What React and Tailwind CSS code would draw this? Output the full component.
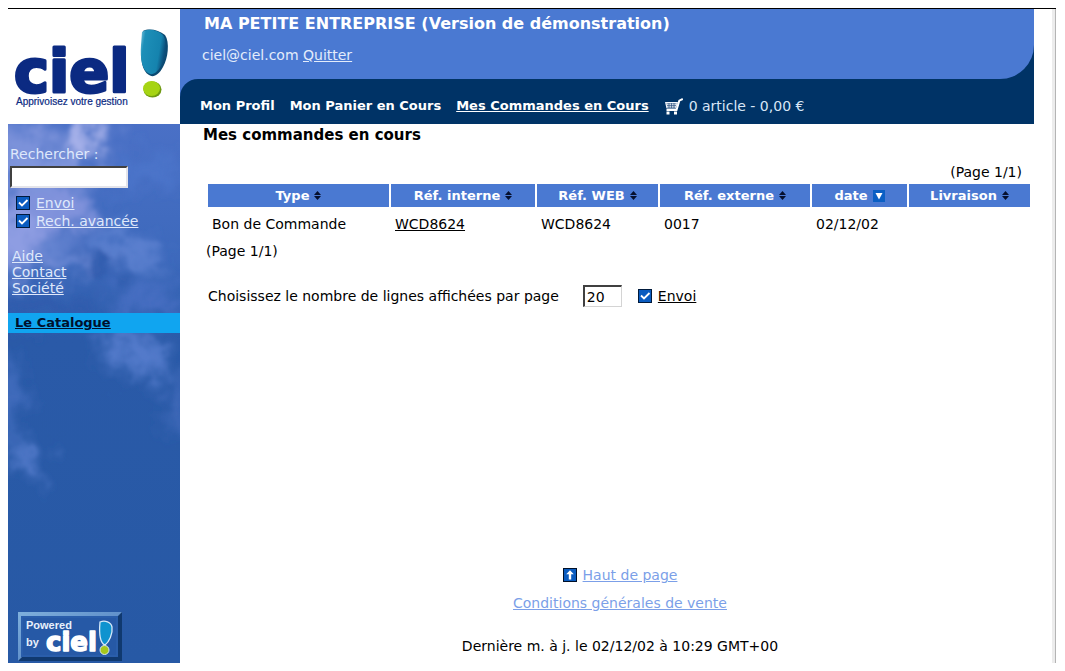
import { useState } from "react";

const columns = [
  { label: "Type", width: "w-[181px]" },
  { label: "Réf. interne", width: "w-[144px]" },
  { label: "Réf. WEB", width: "w-[121px]" },
  { label: "Réf. externe", width: "w-[150px]" },
  { label: "date", width: "w-[95px]", sorted: true },
  { label: "Livraison", width: "" },
];

const orders = [
  {
    type: "Bon de Commande",
    internal: "WCD8624",
    web: "WCD8624",
    external: "0017",
    date: "02/12/02",
    delivery: "",
  },
];

/* ===========================================
              Icons and logos
=========================================== */

function SortIcon() {
  return (
    <svg width="7" height="9" viewBox="0 0 7 9" className="fill-[#06102e]">
      <path d="M3.5 0 L7 4 H0 Z" />
      <path d="M3.5 9 L0 5 H7 Z" />
    </svg>
  );
}

function SortedIcon() {
  return (
    <svg width="12" height="12" viewBox="0 0 12 12">
      <rect width="12" height="12" fill="#0a5fc4" />
      <path d="M2.5 3 H9.5 L6 9.5 Z" fill="#fff" />
    </svg>
  );
}

function CartIcon() {
  return (
    <svg width="19" height="17" viewBox="0 0 19 17">
      <path d="M1 4 H14 L12 10.5 H2.5 Z" fill="#f4f8fd" />
      <path
        d="M2.5 5.8 H12.500 M3 7.500 H12 M3.200 9.200 H11.500 M5 5 V10 M7.500 5 V10 M10 5 V10"
        stroke="#2c5280"
        strokeWidth="0.7"
      />
      <path
        d="M18.800 1 L15.300 2.600 L12.500 12 H2.500"
        fill="none"
        stroke="#fff"
        strokeWidth="2"
      />
      <rect x="2.500" y="13.500" width="3" height="3" fill="#fff" />
      <rect x="10" y="13.500" width="3" height="3" fill="#fff" />
    </svg>
  );
}

function UpIcon() {
  return (
    <svg width="14" height="14" viewBox="0 0 14 14">
      <rect x="0.5" y="0.5" width="13" height="13" fill="#0a5cc0" stroke="#001028" />
      <path d="M7 2.2 L10.8 6.2 H8.200 V11.5 H5.8 V6.2 H3.2 Z" fill="#fff" />
    </svg>
  );
}

function CielLogo() {
  return (
    <svg width="172" height="115" viewBox="0 0 172 115" className="block" role="img" aria-label="ciel!">
      <defs>
        <linearGradient id="drop" x1="0" y1="0" x2="1" y2="0.3">
          <stop offset="0" stopColor="#7cc4dc" />
          <stop offset="0.2" stopColor="#1d8fb8" />
          <stop offset="0.8" stopColor="#1583ae" />
          <stop offset="1" stopColor="#0b4f7c" />
        </linearGradient>
      </defs>
      <text
        x="6"
        y="83"
        fontFamily="DejaVu Sans, sans-serif"
        fontWeight="700"
        fontSize="59"
        fill="#0b2a82"
        stroke="#0b2a82"
        strokeWidth="3"
        strokeLinejoin="round"
      >
        ciel
      </text>
      <path
        d="M135 22 C141 19 151 21 157 26 C162 33 160 50 155 58 C151 66 145 69 141 66 C134 62 132 50 134 36 Z"
        fill="#0c4a72"
      />
      <path
        d="M134 23 C140 19 150 21 155 26 C160 33 158 50 153 57 C149 64 144 67 140 64 C134 60 132 50 133 36 Z"
        fill="url(#drop)"
      />
      <ellipse cx="144.5" cy="80.5" rx="9" ry="8" fill="#6f9a12" />
      <ellipse cx="143.5" cy="79.500" rx="8.5" ry="7.5" fill="#a6d414" />
      <text
        x="8"
        y="96"
        fontFamily="Liberation Sans, sans-serif"
        fontSize="10"
        fill="#0b2a82"
        stroke="#0b2a82"
        strokeWidth="0.2"
      >
        Apprivoisez votre gestion
      </text>
    </svg>
  );
}

function PoweredBadge() {
  return (
    <svg width="104" height="49" viewBox="0 0 104 49" className="block" role="img" aria-label="Powered by ciel!">
      <defs>
        <linearGradient id="bevelLight" x1="0" y1="0" x2="1" y2="1">
          <stop offset="0" stopColor="#7fb0dc" />
          <stop offset="0.6" stopColor="#5c8cc8" />
          <stop offset="1" stopColor="#3567ad" />
        </linearGradient>
      </defs>
      <rect width="104" height="49" fill="#10396f" />
      <path d="M0 0 H104 L100 4 H4 V45 L0 49 Z" fill="url(#bevelLight)" />
      <rect x="3" y="4" width="97" height="41" fill="#2a5eab" />
      <rect x="5" y="6" width="93" height="37" fill="#2659a6" />
      <g fontFamily="Liberation Sans, sans-serif" fontWeight="700" fontSize="11" fill="#e8f0fb">
        <text x="8" y="17">Powered</text>
        <text x="8" y="34">by</text>
      </g>
      <text
        x="28"
        y="39"
        fontFamily="DejaVu Sans, sans-serif"
        fontWeight="700"
        fontSize="26"
        fill="#fff"
        stroke="#fff"
        strokeWidth="1.5"
        strokeLinejoin="round"
      >
        ciel
      </text>
      <path
        d="M82 10 C87 8 93 10 94 15 C95 22 91 30 87 33 C82 31 81 21 82 10 Z"
        fill="#0f93cf"
        stroke="#d7e9f8"
        strokeWidth="1.3"
      />
      <circle cx="86.5" cy="38" r="4.5" fill="#a6c81c" stroke="#d7e9f8" />
    </svg>
  );
}

function Clouds() {
  return (
    <svg
      className="absolute inset-0 h-full w-full"
      viewBox="0 0 172 539"
      preserveAspectRatio="none"
      aria-hidden="true"
    >
      <defs>
        <linearGradient id="sky" x1="0" y1="0" x2="0" y2="1">
          <stop offset="0" stopColor="#4a70c6" />
          <stop offset="0.25" stopColor="#3d69bc" />
          <stop offset="0.4" stopColor="#2a5aa8" />
          <stop offset="1" stopColor="#2759a5" />
        </linearGradient>
        <filter id="soft" x="-30%" y="-30%" width="160%" height="160%">
          <feTurbulence type="fractalNoise" baseFrequency="0.045" numOctaves="5" seed="4" result="noise" />
          <feGaussianBlur in="SourceGraphic" stdDeviation="9" result="hazy" />
          <feDisplacementMap
            in="hazy"
            in2="noise"
            scale="50"
            xChannelSelector="R"
            yChannelSelector="G"
            result="torn"
          />
          <feGaussianBlur in="torn" stdDeviation="1.5" />
        </filter>
      </defs>
      <rect width="172" height="539" fill="url(#sky)" />
      <g filter="url(#soft)">
        <ellipse cx="75" cy="14" rx="22" ry="20" fill="#a9b2ea" />
        <ellipse cx="10" cy="18" rx="34" ry="16" fill="#7c92da" />
        <ellipse cx="30" cy="46" rx="55" ry="16" fill="#7f95dc" />
        <ellipse cx="140" cy="48" rx="38" ry="14" fill="#4c74ca" />
        <ellipse cx="35" cy="88" rx="55" ry="26" fill="#8193dc" />
        <ellipse cx="8" cy="120" rx="26" ry="30" fill="#8e9de2" />
        <ellipse cx="50" cy="135" rx="30" ry="12" fill="#6c88d4" />
        <ellipse cx="120" cy="125" rx="40" ry="10" fill="#6486d4" transform="rotate(32 120 125)" />
        <ellipse cx="95" cy="142" rx="22" ry="12" fill="#2f5aac" transform="rotate(35 95 142)" />
        <ellipse cx="35" cy="184" rx="50" ry="10" fill="#2f5aac" />
        <ellipse cx="140" cy="175" rx="34" ry="12" fill="#4870c4" />
        <ellipse cx="130" cy="230" rx="38" ry="18" fill="#557ccc" transform="rotate(18 130 230)" />
        <ellipse cx="172" cy="280" rx="9" ry="30" fill="#446dbe" />
        <ellipse cx="0" cy="275" rx="9" ry="40" fill="#4a72c4" />
        <ellipse cx="18" cy="332" rx="22" ry="10" fill="#5a80d0" transform="rotate(48 18 332)" />
      </g>
    </svg>
  );
}

/* ===========================================
              Small controls
=========================================== */

function CheckLink({ id, children, checked, onChange, linkClass }) {
  return (
    <div className="flex items-center gap-1.5">
      <span className="relative block h-3.5 w-3.5">
        <input
          type="checkbox"
          checked={checked}
          onChange={(e) => onChange(e.target.checked)}
          aria-labelledby={id}
          className="block h-3.5 w-3.5 appearance-none border border-[#001a3c] bg-[#0a5cc0]"
        />
        {checked && (
          <svg
            viewBox="0 0 14 14"
            className="pointer-events-none absolute inset-0 h-3.5 w-3.5"
          >
            <path d="M3 6.5 L6 9.5 L11.5 4" fill="none" stroke="#fff" strokeWidth="1.8" />
          </svg>
        )}
      </span>
      <a id={id} href="#envoi" className={linkClass}>
        {children}
      </a>
    </div>
  );
}

function Sidebar() {
  const [search, setSearch] = useState("");
  const [send, setSend] = useState(true);
  const [advanced, setAdvanced] = useState(true);

  return (
    <aside className="flex w-[172px] shrink-0 flex-col">
      <CielLogo />

      <div className="relative flex grow flex-col bg-[#2759a5] text-[#dfe8fb]">
        <Clouds />

        <div className="relative flex grow flex-col">
          <form className="px-0.5 pt-5" onSubmit={(e) => e.preventDefault()}>
            <label htmlFor="search" className="block leading-5">
              Rechercher :
            </label>
            <input
              id="search"
              type="text"
              value={search}
              onChange={(e) => setSearch(e.target.value)}
              className="mt-0.5 block h-[22px] w-[118px] border-2 border-t-[#404040] border-r-[#e4e4ea] border-b-[#e4e4ea] border-l-[#404040] bg-white px-1 text-black outline-none"
            />
            <div className="flex flex-col pt-1.5 pl-1.5 leading-[18px]">
              <CheckLink id="search-send" checked={send} onChange={setSend} linkClass="underline">
                Envoi
              </CheckLink>
              <CheckLink id="search-advanced" checked={advanced} onChange={setAdvanced} linkClass="underline">
                Rech. avancée
              </CheckLink>
            </div>
          </form>

          <nav className="flex flex-col items-start pt-[18px] pl-1 leading-4">
            <a href="#aide" className="underline">Aide</a>
            <a href="#contact" className="underline">Contact</a>
            <a href="#societe" className="underline">Société</a>
          </nav>

          <a
            href="#catalogue"
            className="mt-[17px] block bg-[#10a5f0] pl-[7px] text-[13px] leading-5 font-bold text-[#00102c] underline"
          >
            Le Catalogue
          </a>

          <div className="mt-auto pb-0.5 pl-2.5">
            <PoweredBadge />
          </div>
        </div>
      </div>
    </aside>
  );
}

function Header() {
  return (
    <header className="bg-[#4a79d2] text-white">
      <div className="bg-[#003366]">
        <div className="h-[70px] rounded-br-[34px] bg-[#4a79d2] pl-[22px]">
          <h1 className="pt-[5px] pl-0.5 text-[16px] leading-5 font-bold">
            MA PETITE ENTREPRISE (Version de démonstration)
          </h1>
          <p className="pt-[13px] leading-4 text-[#e3ecfb]">
            ciel@ciel.com <a href="#quitter" className="underline">Quitter</a>
          </p>
        </div>
      </div>

      <nav className="flex h-[45px] items-center gap-[15px] rounded-tl-[18px] bg-[#003366] pt-[9px] pl-5 text-[13px] font-bold">
        <a href="#profil">Mon Profil</a>
        <a href="#panier">Mon Panier en Cours</a>
        <a href="#commandes" className="underline">Mes Commandes en Cours</a>
        <span className="flex items-center gap-1.5 text-[14px] font-normal text-[#d8e6f6]">
          <CartIcon />
          0 article - 0,00 €
        </span>
      </nav>
    </header>
  );
}

function OrdersTable() {
  return (
    <table className="w-full table-fixed border-separate border-spacing-x-0.5 border-spacing-y-0">
      <thead>
        <tr>
          {columns.map((col) => (
            <th key={col.label} className={`h-[23px] bg-[#4a79d2] p-0 text-[13px] text-white ${col.width}`}>
              <button type="button" className="inline-flex items-center gap-[5px] font-bold">
                {col.label}
                {col.sorted ? <SortedIcon /> : <SortIcon />}
              </button>
            </th>
          ))}
        </tr>
      </thead>
      <tbody>
        {orders.map((order) => (
          <tr key={order.internal}>
            <td className="h-[34px] px-1 py-0">{order.type}</td>
            <td className="px-1 py-0">
              <a href="#commande" className="underline">{order.internal}</a>
            </td>
            <td className="px-1 py-0">{order.web}</td>
            <td className="px-1 py-0">{order.external}</td>
            <td className="px-1 py-0">{order.date}</td>
            <td className="px-1 py-0">{order.delivery}</td>
          </tr>
        ))}
      </tbody>
    </table>
  );
}

export default function App() {
  const [perPage, setPerPage] = useState("20");
  const [send, setSend] = useState(true);

  return (
    <div className="flex min-h-screen bg-white py-2 pr-[9px] pl-2 font-['DejaVu_Sans',Verdana,sans-serif] text-[14px] text-black">
      <div className="flex grow border-t border-black">
        <Sidebar />

        <div className="mr-[18px] flex grow flex-col">
          <Header />

          <main className="flex grow flex-col pl-[26px]">
            <h2 className="-ml-[3px] pt-px text-[15px] leading-5 font-bold">
              Mes commandes en cours
            </h2>

            <p className="pt-[17px] pr-3 text-right leading-5">(Page 1/1)</p>

            <div className="pt-0.5 pr-0.5">
              <OrdersTable />
            </div>

            <p className="leading-5">(Page 1/1)</p>

            <form
              className="flex items-center pt-6 pl-0.5"
              onSubmit={(e) => e.preventDefault()}
            >
              <label htmlFor="per-page" className="pr-4">
                Choisissez le nombre de lignes affichées par page
              </label>
              <input
                id="per-page"
                type="text"
                value={perPage}
                onChange={(e) => setPerPage(e.target.value)}
                className="mr-4 ml-2 h-[22px] w-[39px] border border-t-2 border-l-2 border-t-[#404040] border-r-[#d4d4d4] border-b-[#d4d4d4] border-l-[#404040] bg-white px-0.5 outline-none"
              />
              <CheckLink id="page-send" checked={send} onChange={setSend} linkClass="underline">
                Envoi
              </CheckLink>
            </form>

            <footer className="mt-auto flex flex-col items-center pb-[7px] leading-5">
              <a href="#haut" className="flex items-center gap-1.5 text-[#7b9fe8] underline">
                <UpIcon />
                Haut de page
              </a>
              <a href="#conditions" className="pt-2 text-[#7b9fe8] underline">
                Conditions générales de vente
              </a>
              <p className="pt-[23px]">Dernière m. à j. le 02/12/02 à 10:29 GMT+00</p>
            </footer>
          </main>
        </div>

        {/* Edge of the window's scroll bar */}
        <div className="w-1 shrink-0 border-r border-[#b4b4b4] bg-[#ececec]" />
      </div>
    </div>
  );
}
